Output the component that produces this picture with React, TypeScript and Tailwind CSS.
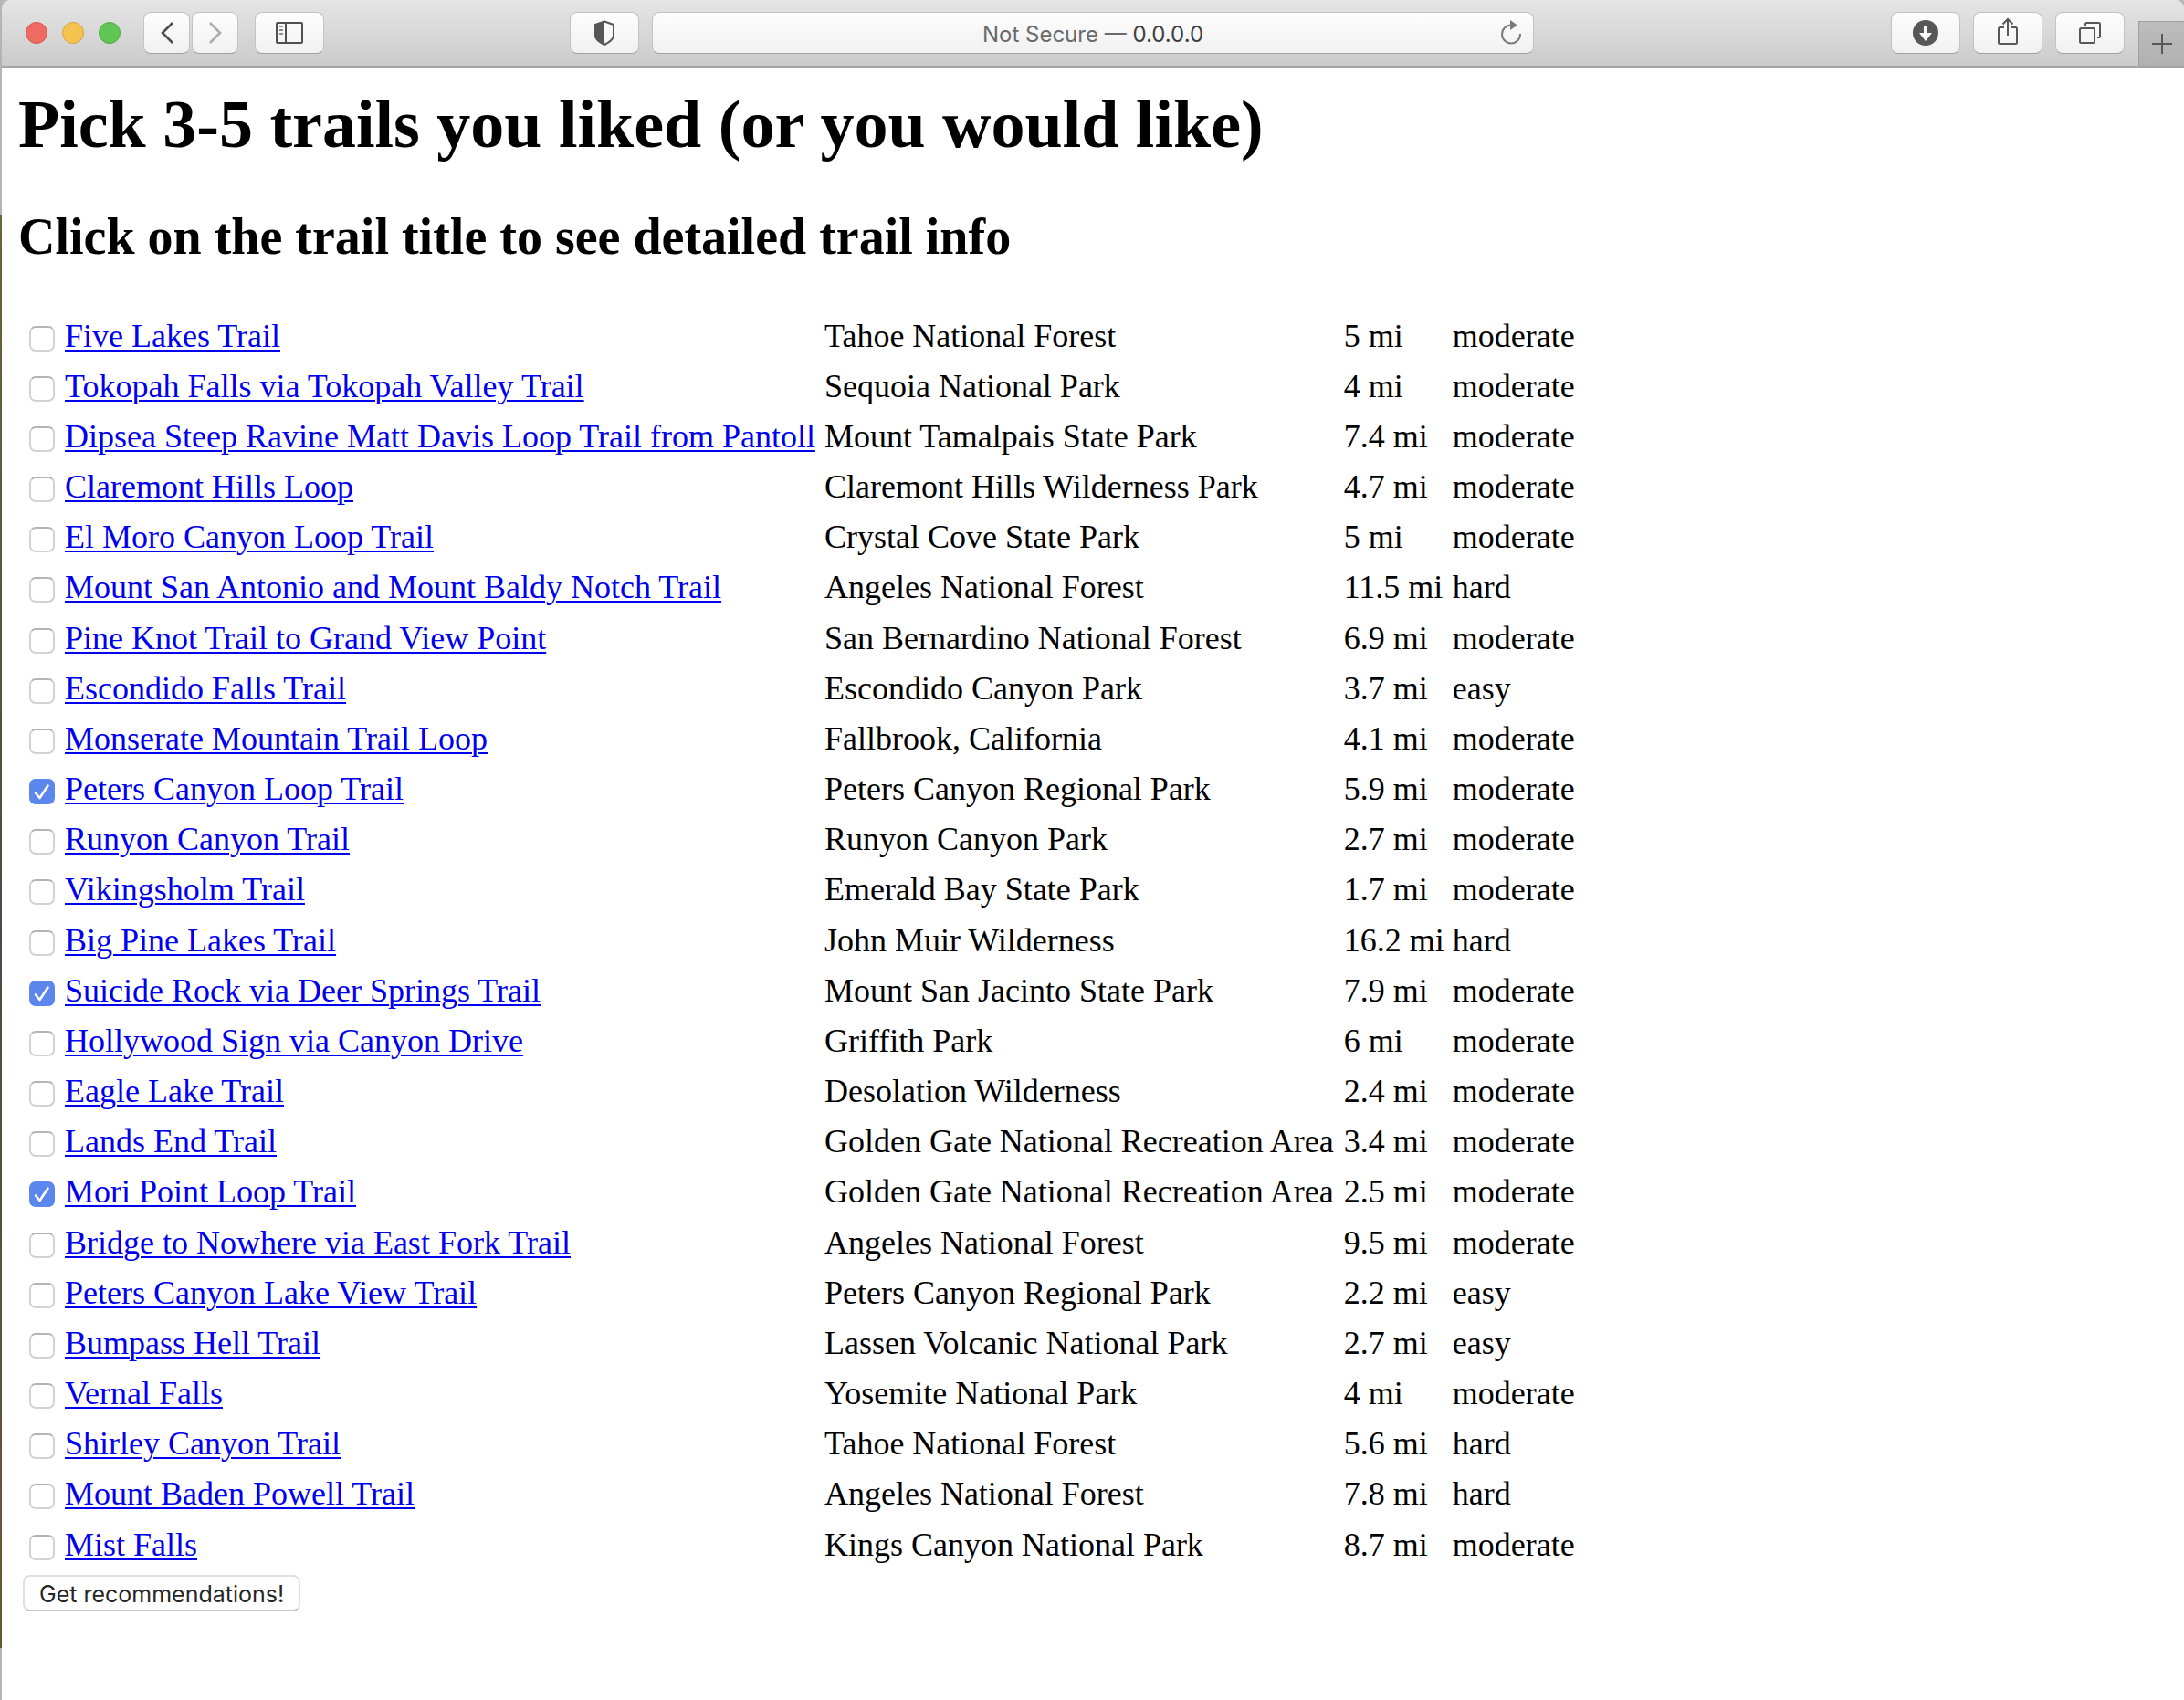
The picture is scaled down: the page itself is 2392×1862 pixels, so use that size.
import React from "react";

type Trail = [name: string, place: string, miles: string, level: string, picked?: boolean];

const trails: Trail[] = [
  ["Five Lakes Trail", "Tahoe National Forest", "5 mi", "moderate"],
  ["Tokopah Falls via Tokopah Valley Trail", "Sequoia National Park", "4 mi", "moderate"],
  ["Dipsea Steep Ravine Matt Davis Loop Trail from Pantoll", "Mount Tamalpais State Park", "7.4 mi", "moderate"],
  ["Claremont Hills Loop", "Claremont Hills Wilderness Park", "4.7 mi", "moderate"],
  ["El Moro Canyon Loop Trail", "Crystal Cove State Park", "5 mi", "moderate"],
  ["Mount San Antonio and Mount Baldy Notch Trail", "Angeles National Forest", "11.5 mi", "hard"],
  ["Pine Knot Trail to Grand View Point", "San Bernardino National Forest", "6.9 mi", "moderate"],
  ["Escondido Falls Trail", "Escondido Canyon Park", "3.7 mi", "easy"],
  ["Monserate Mountain Trail Loop", "Fallbrook, California", "4.1 mi", "moderate"],
  ["Peters Canyon Loop Trail", "Peters Canyon Regional Park", "5.9 mi", "moderate", true],
  ["Runyon Canyon Trail", "Runyon Canyon Park", "2.7 mi", "moderate"],
  ["Vikingsholm Trail", "Emerald Bay State Park", "1.7 mi", "moderate"],
  ["Big Pine Lakes Trail", "John Muir Wilderness", "16.2 mi", "hard"],
  ["Suicide Rock via Deer Springs Trail", "Mount San Jacinto State Park", "7.9 mi", "moderate", true],
  ["Hollywood Sign via Canyon Drive", "Griffith Park", "6 mi", "moderate"],
  ["Eagle Lake Trail", "Desolation Wilderness", "2.4 mi", "moderate"],
  ["Lands End Trail", "Golden Gate National Recreation Area", "3.4 mi", "moderate"],
  ["Mori Point Loop Trail", "Golden Gate National Recreation Area", "2.5 mi", "moderate", true],
  ["Bridge to Nowhere via East Fork Trail", "Angeles National Forest", "9.5 mi", "moderate"],
  ["Peters Canyon Lake View Trail", "Peters Canyon Regional Park", "2.2 mi", "easy"],
  ["Bumpass Hell Trail", "Lassen Volcanic National Park", "2.7 mi", "easy"],
  ["Vernal Falls", "Yosemite National Park", "4 mi", "moderate"],
  ["Shirley Canyon Trail", "Tahoe National Forest", "5.6 mi", "hard"],
  ["Mount Baden Powell Trail", "Angeles National Forest", "7.8 mi", "hard"],
  ["Mist Falls", "Kings Canyon National Park", "8.7 mi", "moderate"],
];

const surface =
  "h-[46px] rounded-[8px] border border-[#c3c3c3] border-b-[#a2a2a2] bg-linear-to-b from-[#fdfdfd] to-[#f1f1f1]";

function ToolButton({ label, wide, children }: { label: string; wide?: boolean; children: React.ReactNode }) {
  return (
    <button
      type="button"
      aria-label={label}
      className={`${surface} flex shrink-0 items-center justify-center ${wide ? "w-[76px]" : "w-[51px]"}`}
    >
      {children}
    </button>
  );
}

function Toolbar() {
  return (
    <header className="grid h-[74px] grid-cols-[622fr_1056fr_712fr] rounded-t-[10px] border-b-2 border-[#a4a4a4] bg-linear-to-b from-[#e5e5e5] to-[#cbcbcb]">
      <div className="flex items-start pt-[13px] pl-[26px]">
        <div className="mr-[25px] flex h-[46px] items-center gap-4">
          <button type="button" aria-label="Close" className="size-6 rounded-full border border-[#d65549] bg-[#ed6b60]" />
          <button type="button" aria-label="Minimize" className="size-6 rounded-full border border-[#dba13a] bg-[#f5c350]" />
          <button type="button" aria-label="Zoom" className="size-6 rounded-full border border-[#4dab3f] bg-[#62c655]" />
        </div>
        <div className="mr-[18px] flex gap-0.5">
          <ToolButton label="Back">
            <svg width="16" height="26" viewBox="0 0 16 26" fill="none" stroke="#4f4f4f" strokeWidth="2.6">
              <path d="M14 2 3 13l11 11" />
            </svg>
          </ToolButton>
          <ToolButton label="Forward">
            <svg width="16" height="26" viewBox="0 0 16 26" fill="none" stroke="#ababab" strokeWidth="2.6">
              <path d="M2 2l11 11L2 24" />
            </svg>
          </ToolButton>
        </div>
        <ToolButton label="Show sidebar" wide>
          <svg width="30" height="24" viewBox="0 0 30 24" fill="none" stroke="#505050" strokeWidth="2">
            <rect x="1" y="1" width="28" height="22" rx="1" />
            <path d="M11 1v22" />
            <path d="M4 5h4M4 9h4M4 13h4" stroke="#8f8f8f" />
          </svg>
        </ToolButton>
      </div>

      <div className="flex min-w-0 items-start gap-[14px] pt-[13px]">
        <ToolButton label="Privacy report" wide>
          <svg width="24" height="28" viewBox="0 0 24 28">
            <path d="M12 1.5 22 5v12c0 4.500-5 7.500-10 10C7 24.500 2 21.500 2 17V5z" fill="none" stroke="#575757" strokeWidth="2" strokeLinejoin="round" />
            <path d="M12 1.500 2 5v12c0 4.500 5 7.500 10 10z" fill="#575757" />
          </svg>
        </ToolButton>
        <div className={`${surface} relative flex min-w-0 flex-1`}>
          <button type="button" className="flex-1 pt-0.5 font-[Inter,sans-serif] text-[24px] leading-[44px] text-[#6a6a6a]">
            Not Secure — <span className="text-[#3f3f3f]">0.0.0.0</span>
          </button>
          <button type="button" aria-label="Reload" className="absolute top-[7px] right-[12px]">
            <svg width="24" height="28" viewBox="0 0 24 28">
              <path d="M12 6.500A10 10 0 1 0 22 16" fill="none" stroke="#7b7b7b" strokeWidth="2" />
              <path d="M11 1v11l8-5.500z" fill="#7b7b7b" />
            </svg>
          </button>
        </div>
      </div>

      <div className="flex items-start justify-end">
        <div className="mr-[15px] flex gap-[14px] pt-[13px]">
          <ToolButton label="Downloads" wide>
            <svg width="28" height="28" viewBox="0 0 28 28">
              <circle cx="14" cy="14" r="14" fill="#575757" />
              <path d="M12 6h4v8h5l-7 9-7-9h5z" fill="#fafafa" />
            </svg>
          </ToolButton>
          <ToolButton label="Share" wide>
            <svg width="24" height="32" viewBox="0 0 24 32" fill="none" stroke="#575757" strokeWidth="2" className="-mt-1">
              <path d="M8 12H3.500q-1.500 0-1.500 1.500V28.500q0 1.500 1.500 1.500h17q1.500 0 1.500-1.500V13.500q0-1.500-1.500-1.500H16" />
              <path d="M12 21V3M6.500 8.500 12 3l5.500 5.500" />
            </svg>
          </ToolButton>
          <ToolButton label="Show all tabs" wide>
            <svg width="26" height="26" viewBox="0 0 26 26" fill="none" stroke="#575757" strokeWidth="2">
              <rect x="2" y="8" width="16" height="16" rx="1.500" />
              <path d="M8 5V3.500Q8 2 9.500 2h13Q24 2 24 3.500v13q0 1.500-1.500 1.500H21" />
            </svg>
          </ToolButton>
        </div>
        <button
          type="button"
          aria-label="New tab"
          className="mt-[23px] flex h-[49px] w-[50px] items-center justify-center border-t border-l border-[#a0a0a0] bg-linear-to-b from-[#bdbdbd] to-[#b0b0b0]"
        >
          <svg width="22" height="22" viewBox="0 0 22 22" stroke="#575757" strokeWidth="2">
            <path d="M11 0v22M0 11h22" />
          </svg>
        </button>
      </div>
    </header>
  );
}

function TrailRow({ trail, index }: { trail: Trail; index: number }) {
  const [name, place, miles, level, picked] = trail;
  const id = `trail-${index}`;
  return (
    <tr className="h-[55px] nth-[6n]:h-[56px]">
      <td className="pt-[6px] pr-[11px] pl-[12px]">
        <span className="relative block size-7">
          <input
            id={id}
            type="checkbox"
            defaultChecked={picked}
            aria-label={name}
            className="peer block size-7 appearance-none rounded-[7px] border-2 border-[#d2d2d2] border-t-[#b4b4b4] bg-white checked:border-[#5b86ec] checked:bg-[#5b86ec]"
          />
          <svg
            className="pointer-events-none absolute inset-0 hidden peer-checked:block"
            viewBox="0 0 28 28"
            fill="none"
            stroke="#fff"
            strokeWidth="2.6"
            strokeLinecap="round"
            strokeLinejoin="round"
          >
            <path d="M7 15.500l4.500 5.500L20.500 7.500" />
          </svg>
        </span>
      </td>
      <td className="pr-[10px]">
        <a href={`#${id}`} className="text-[#0000ee] underline decoration-2 underline-offset-[3px]">
          {name}
        </a>
      </td>
      <td className="pr-[11px]">{place}</td>
      <td className="pr-[9px]">{miles}</td>
      <td>{level}</td>
    </tr>
  );
}

export default function App() {
  return (
    <div className="flex min-h-screen bg-[#b9b9b9]">
      <div aria-hidden="true" className="flex w-0.5 shrink-0 flex-col">
        <div className="h-[235px] bg-[#b4b4b4]" />
        <div className="flex-1 bg-linear-to-b from-[#6b6438] via-[#4c4a42] to-[#6b5836]" />
        <div className="h-[57px] bg-[#b4b4b4]" />
      </div>
      <div className="min-w-0 flex-1 rounded-t-[10px] bg-white">
        <Toolbar />
        <main className="px-[18px] pt-[20px] font-['Liberation_Serif',serif] text-black">
          <h1 className="text-[74px] leading-[84px] font-bold">Pick 3-5 trails you liked (or you would like)</h1>
          <h2 className="mt-[50px] text-[56px] leading-[62px] font-bold">
            Click on the trail title to see detailed trail info
          </h2>
          <form className="mt-[50px]" onSubmit={(e) => e.preventDefault()}>
            <table className="border-collapse text-[36px] leading-[42px] whitespace-nowrap">
              <tbody>
                {trails.map((trail, i) => (
                  <TrailRow key={trail[0]} trail={trail} index={i} />
                ))}
              </tbody>
            </table>
            <button
              type="submit"
              className="mt-[6px] ml-[5px] h-10 rounded-[8px] border-2 border-[#e0e0e0] border-b-[#c9c9c9] bg-white px-4 pt-px font-[Inter,sans-serif] text-[25px] leading-[34px] text-[#262626]"
            >
              Get recommendations!
            </button>
          </form>
        </main>
      </div>
    </div>
  );
}
